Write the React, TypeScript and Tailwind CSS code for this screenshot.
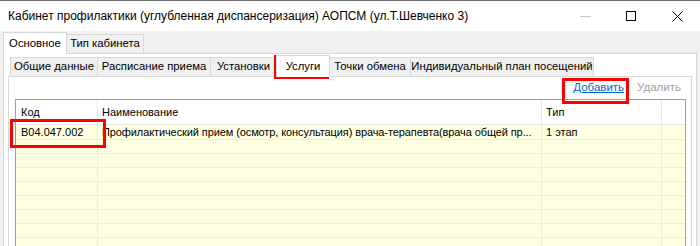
import React from 'react';

const outerTabs = [
  { label: 'Основное', active: true, w: 'w-[64px]' },
  { label: 'Тип кабинета', active: false, w: 'w-[78px]' },
];

const innerTabs = [
  { label: 'Общие данные', active: false, w: 'w-[88px]' },
  { label: 'Расписание приема', active: false, w: 'w-[114px]' },
  { label: 'Установки', active: false, w: 'w-[67px]' },
  { label: 'Услуги', active: true, w: 'w-[54px]' },
  { label: 'Точки обмена', active: false, w: 'w-[82px]' },
  { label: 'Индивидуальный план посещений', active: false, w: 'w-[184px]' },
];

// name is shown already cut, the way the grid clips it
const rows = [
  {
    code: 'B04.047.002',
    name: 'Профилактический прием (осмотр, консультация) врача-терапевта(врача общей пр...',
    type: '1 этап',
  },
];

const Tab: React.FC<{ label: string; active: boolean; first: boolean; w: string }> = ({ label, active, first, w }) =>
  active ? (
    <div
      className={`relative z-10 -mb-px h-[22px] ${w} flex items-center justify-center whitespace-nowrap bg-white border border-b-0 border-[#d9d9d9] ${first ? '' : '-ml-px'}`}
    >
      {label}
    </div>
  ) : (
    <div
      className={`h-[19px] ${w} flex items-center justify-center whitespace-nowrap bg-[#f0f0f0] border border-b-0 border-[#d9d9d9] ${first ? '' : '-ml-px'}`}
    >
      {label}
    </div>
  );

export default function App() {
  const emptyRows = Array.from({ length: 10 });

  return (
    <div className="relative w-[700px] h-[246px] overflow-hidden flex flex-col bg-[#f0f0f0] border-t border-[#6f6f6f] text-[11px] leading-none text-black font-['Liberation_Sans',Arial,sans-serif]">
      {/* Title bar */}
      <div className="h-[30px] shrink-0 flex items-center bg-white">
        <span className="pl-[8px] text-[12px]">
          Кабинет профилактики (углубленная диспансеризация) АОПСМ (ул.Т.Шевченко 3)
        </span>
        <div className="ml-auto flex items-center h-full">
          <div className="w-[46px] h-full flex items-center justify-center">
            <div className="w-[11px] h-px bg-[#c6c6c6]" />
          </div>
          <div className="w-[46px] h-full flex items-center justify-center">
            <div className="w-[10px] h-[10px] border border-black" />
          </div>
          <div className="w-[46px] h-full flex items-center justify-center">
            <svg width="11" height="11" viewBox="0 0 11 11">
              <path d="M0.5 0.5 L10.5 10.5 M10.5 0.5 L0.5 10.5" stroke="#000" strokeWidth="1" />
            </svg>
          </div>
        </div>
      </div>

      {/* Outer tab control */}
      <div className="flex-1 flex flex-col px-[3px]">
        <div className="h-[22px] shrink-0 flex items-end text-[11.3px]">
          {outerTabs.map((t, i) => (
            <Tab key={t.label} label={t.label} active={t.active} w={t.w} first={i === 0} />
          ))}
        </div>
        <div className="flex-1 flex flex-col bg-white border border-[#d9d9d9] px-[4px]">
          {/* Inner tabs */}
          <div className="h-[22px] shrink-0 flex items-end pl-[2px] text-[11.3px]">
            {innerTabs.map((t, i) => (
              <Tab key={t.label} label={t.label} active={t.active} w={t.w} first={i === 0} />
            ))}
          </div>
          <div className="flex-1 flex flex-col bg-white border border-[#d9d9d9] pl-[6px] pr-[5px]">
            {/* Toolbar */}
            <div className="h-[22px] shrink-0 flex items-center justify-end gap-[13px] pr-[5px] text-[11.5px]">
              <span className="text-[#0066cc] underline">Добавить</span>
              <span className="text-[#a0a0a0]">Удалить</span>
            </div>

            {/* Grid */}
            <div className="flex-1 border border-[#a0a0a0] overflow-hidden">
              <div className="flex h-[25px] bg-white border-b border-[#e6e6e6]">
                <div className="w-[82px] pl-[5px] flex items-center border-r border-[#e6e6e6]">Код</div>
                <div className="w-[444px] pl-[4px] flex items-center border-r border-[#e6e6e6]">Наименование</div>
                <div className="w-[120px] pl-[4px] flex items-center border-r border-[#e6e6e6]">Тип</div>
                <div className="flex-1" />
              </div>
              {rows.map((r) => (
                <div key={r.code} className="flex h-[15px] bg-[#ffffe1] border-b border-[#ececec]">
                  <div className="w-[82px] pl-[5px] flex items-center border-r border-[#ececec]">{r.code}</div>
                  <div className="w-[444px] pl-[4px] flex items-center border-r border-[#ececec] overflow-hidden whitespace-nowrap tracking-[-0.1px]">
                    {r.name}
                  </div>
                  <div className="w-[120px] pl-[4px] flex items-center border-r border-[#ececec]">{r.type}</div>
                  <div className="flex-1" />
                </div>
              ))}
              {emptyRows.map((_, i) => (
                <div key={i} className="flex h-[14px] bg-[#ffffe1] border-b border-[#ececec]">
                  <div className="w-[82px] border-r border-[#ececec]" />
                  <div className="w-[444px] border-r border-[#ececec]" />
                  <div className="w-[120px] border-r border-[#ececec]" />
                  <div className="flex-1" />
                </div>
              ))}
            </div>
          </div>
        </div>
      </div>

      {/* Red highlight frames */}
      <div className="absolute left-[274px] top-[54px] w-[55px] h-[24px] border-[3px] border-[#ff0000]" />
      <div className="absolute left-[562px] top-[77px] w-[67px] h-[26px] border-[3px] border-[#ff0000]" />
      <div className="absolute left-[10px] top-[118px] w-[96px] h-[29px] border-[3px] border-[#ff0000]" />
    </div>
  );
}
